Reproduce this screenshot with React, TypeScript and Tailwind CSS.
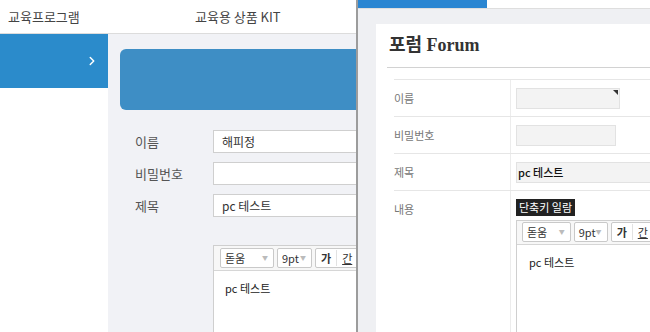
import {ChevronRight} from "lucide-react";

const KR = "font-['Noto_Sans_CJK_KR','Noto_Sans',sans-serif]";

function EditorToolbar({small}: {small?: boolean}) {
  return (
    <div
      className={`flex items-center gap-[3px] border-b border-[#d6d6d6] bg-[#f7f7f7] ${
        small ? "h-[24px] pl-[5px]" : "h-[25px] pl-[6px]"
      }`}
    >
      <div className="flex h-[20px] w-[54px] items-center justify-between rounded-[2px] border border-[#c9c9c9] bg-white pl-[4px] pr-[5px]">
        <span className="text-[11px] leading-none text-[#333]">돋움</span>
        <span className="text-[6px] leading-none text-[#bbb]">▼</span>
      </div>
      <div className="flex h-[20px] w-[35px] items-center justify-between rounded-[2px] border border-[#c9c9c9] bg-white pl-[4px] pr-[5px]">
        <span className="text-[11px] leading-none text-[#333]">9pt</span>
        <span className="text-[6px] leading-none text-[#bbb]">▼</span>
      </div>
      <div className="flex h-[20px] items-center rounded-[2px] border border-[#c9c9c9] bg-white">
        <span className="px-[5px] text-[11px] font-bold text-[#333]">가</span>
        <span className="border-l border-[#e2e2e2] px-[5px] text-[11px] text-[#333] underline">
          간
        </span>
        <span className="border-l border-[#e2e2e2] px-[5px] text-[11px] italic text-[#333]">
          가
        </span>
      </div>
    </div>
  );
}

function LeftPage() {
  const rows = [
    {label: "이름", value: "해피정"},
    {label: "비밀번호", value: ""},
    {label: "제목", value: "pc 테스트"},
  ];

  return (
    <div className={`flex h-full w-[356px] shrink-0 flex-col overflow-hidden bg-white ${KR}`}>
      {/* Top header */}
      <header className="flex h-[34px] shrink-0 items-center border-b border-[#dcdcdc]">
        <div className="w-[108px] pl-[8px] text-[13px] text-[#444]">교육프로그램</div>
        <div className="pl-[87px] text-[13px] text-[#444] whitespace-nowrap">교육용 상품 KIT</div>
      </header>

      <div className="flex flex-1">
        {/* Sidebar */}
        <div className="w-[108px] shrink-0 bg-white">
          <div className="flex h-[54px] items-center justify-end bg-[#2b8bcb] pr-[9px]">
            <ChevronRight size={14} strokeWidth={2.5} className="text-white" />
          </div>
        </div>

        {/* Main */}
        <div className="flex-1 overflow-hidden bg-[#f1f2f6] pl-[12px] pt-[15px]">
          <div className="h-[61px] w-[260px] rounded-[6px] bg-[#3e8ec5]" />

          <div className="mt-[20px] flex flex-col gap-[9px]">
            {rows.map((row) => (
              <div key={row.label} className="flex items-center">
                <div className="w-[93px] shrink-0 pl-[15px] text-[13px] text-[#555]">
                  {row.label}
                </div>
                <div className="flex h-[23px] w-[170px] shrink-0 items-center border border-[#cfcfcf] bg-white pl-[8px] text-[12px] text-[#333]">
                  {row.value}
                </div>
              </div>
            ))}
          </div>

          <div className="ml-[93px] mt-[28px] h-[120px] w-[170px] border border-[#cfcfcf] bg-white">
            <EditorToolbar />
            <div className="pl-[11px] pt-[9px] text-[11px] text-[#222]">pc 테스트</div>
          </div>
        </div>
      </div>
    </div>
  );
}

function ForumWindow() {
  return (
    <div className={`flex h-full flex-1 flex-col overflow-hidden border-l-2 border-[#9c9c9c] bg-[#eff0f3] ${KR}`}>
      {/* Tab strip */}
      <div className="flex h-[9px] shrink-0 border-b border-[#dedede] bg-white">
        <div className="w-[129px] bg-[#2a86d2]" />
      </div>

      <div className="flex-1 pl-[18px] pt-[15px]">
        <div className="h-full bg-white pl-[11px]">
          <div className="flex h-[44px] items-center border-b border-[#d2d2d2] pl-[2px]">
            <h1 className="text-[18px] font-bold text-[#333] font-['Liberation_Serif','Noto_Sans_CJK_KR',serif]">
              포럼 Forum
            </h1>
          </div>

          <div className="ml-[7px] mt-[11px]">
            {/* 이름 */}
            <div className="flex h-[37px] border-t border-[#e6e6e6]">
              <div className="flex w-[117px] shrink-0 items-center border-r border-[#ececec] text-[11px] text-[#777]">
                이름
              </div>
              <div className="flex items-center pl-[5px]">
                <div className="relative h-[21px] w-[104px] border border-[#e2e2e2] bg-[#f3f3f3]">
                  <span className="absolute right-[1px] top-[1px] h-0 w-0 border-l-[5px] border-t-[5px] border-l-transparent border-t-[#333]" />
                </div>
              </div>
            </div>

            {/* 비밀번호 */}
            <div className="flex h-[37px] border-t border-[#e6e6e6]">
              <div className="flex w-[117px] shrink-0 items-center border-r border-[#ececec] text-[11px] text-[#777]">
                비밀번호
              </div>
              <div className="flex items-center pl-[5px]">
                <div className="h-[21px] w-[100px] border border-[#e2e2e2] bg-[#f3f3f3]" />
              </div>
            </div>

            {/* 제목 */}
            <div className="flex h-[37px] border-t border-[#e6e6e6]">
              <div className="flex w-[117px] shrink-0 items-center border-r border-[#ececec] text-[11px] text-[#777]">
                제목
              </div>
              <div className="flex items-center pl-[5px]">
                <div className="flex h-[21px] w-[160px] items-center border border-[#e2e2e2] bg-[#f3f3f3] pl-[1px] text-[11px] font-medium text-[#111]">
                  pc 테스트
                </div>
              </div>
            </div>

            {/* 내용 */}
            <div className="flex h-[160px] border-t border-[#e6e6e6]">
              <div className="w-[117px] shrink-0 border-r border-[#ececec] pt-[10px] text-[11px] leading-[16px] text-[#777]">
                내용
              </div>
              <div className="flex flex-1 flex-col items-start pl-[5px] pt-[8px]">
                <div className="flex h-[18px] items-center bg-[#222] px-[3px] text-[11px] leading-none text-white">
                  단축키 일람
                </div>
                <div className="mt-[4px] h-[140px] w-[160px] border border-[#cfcfcf] bg-white">
                  <EditorToolbar small />
                  <div className="pl-[12px] pt-[9px] text-[11px] text-[#222]">pc 테스트</div>
                </div>
              </div>
            </div>
          </div>
        </div>
      </div>
    </div>
  );
}

export default function App() {
  return (
    <div className="flex h-[332px] w-[650px] overflow-hidden bg-white">
      <LeftPage />
      <ForumWindow />
    </div>
  );
}
